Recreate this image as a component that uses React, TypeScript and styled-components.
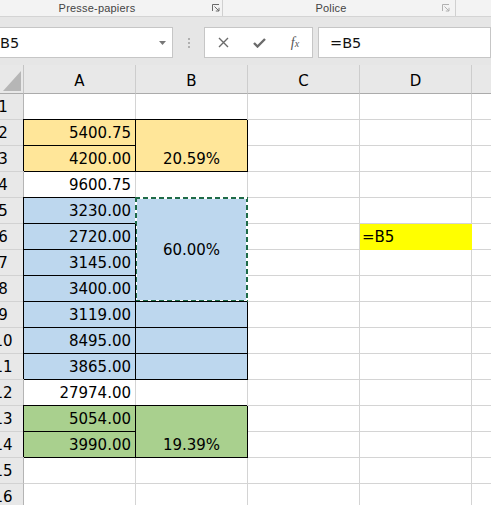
import React from 'react';
import styled, { createGlobalStyle, css } from 'styled-components';

const Global = createGlobalStyle`
  html, body { margin: 0; padding: 0; background: #e6e6e6; }
  body { font-family: "DejaVu Sans", sans-serif; overflow: hidden; }
  * { box-sizing: border-box; }
`;

const Page = styled.div`
  width: 491px;
  height: 505px;
  overflow: hidden;
  background: #e6e6e6;
`;

const Ribbon = styled.div`
  display: flex;
  height: 17px;
  background: #f3f3f3;
  border-bottom: 1px solid #d4d4d4;
  font-family: "Liberation Sans", Arial, sans-serif;
  font-size: 11px;
  color: #444;
`;

const Group = styled.div<{ $w: number }>`
  flex: none;
  width: ${(p) => p.$w}px;
  display: flex;
  align-items: center;
  border-right: 1px solid #d0d0d0;
`;

const GroupLabel = styled.div<{ $pr: number }>`
  flex: 1;
  text-align: center;
  padding-right: ${(p) => p.$pr}px;
  letter-spacing: 0.2px;
`;

const Launcher = styled.svg<{ $mr: number; $c: string }>`
  flex: none;
  width: 8px;
  height: 8px;
  margin-right: ${(p) => p.$mr}px;
  stroke: ${(p) => p.$c};
  fill: none;
  stroke-width: 1;
`;

const FormulaBar = styled.div`
  display: flex;
  height: 31px;
  margin-top: 10px;
`;

const Box = styled.div`
  background: #fff;
  border: 1px solid #c6c6c6;
  display: flex;
  align-items: center;
`;

const NameBox = styled(Box)`
  width: 177px;
  margin-left: -4px;
  padding-left: 3px;
  padding-right: 6px;
  font-size: 14.5px;
  color: #111;
  justify-content: space-between;
`;

const Dots = styled.div`
  width: 31px;
  display: flex;
  flex-direction: column;
  align-items: center;
  justify-content: center;
  gap: 2px;
`;

const Dot = styled.span`
  width: 2px;
  height: 2px;
  background: #b0b0b0;
`;

const ButtonBox = styled(Box)`
  width: 109px;
  display: grid;
  grid-template-columns: repeat(3, 36px);
  padding-left: 0px;
`;

const IconCell = styled.div`
  display: flex;
  align-items: center;
  justify-content: center;
  height: 100%;
  color: #666;
`;

const Fx = styled.span`
  font-family: "Liberation Serif", "DejaVu Serif", serif;
  font-style: italic;
  font-size: 14px;
  color: #555;
  & small { font-size: 10px; }
`;

const FormulaInput = styled(Box)`
  flex: 1;
  margin-left: 5px;
  padding-left: 11px;
  font-size: 14.5px;
  color: #111;
`;

const Sheet = styled.div`
  margin-top: 7px;
  margin-left: -17px;
  display: grid;
  grid-template-columns: 41px repeat(5, 112px);
  grid-template-rows: 29px repeat(16, 26px);
  font-family: "DejaVu Sans", sans-serif;
  font-size: 15px;
  color: #000;
`;

const Corner = styled.div`
  grid-row: 1;
  grid-column: 1;
  background: #e8e8e8;
  border-right: 1px solid #c4c4c4;
  border-bottom: 1px solid #ababab;
  display: flex;
  justify-content: flex-end;
  align-items: flex-end;
  padding: 0 2px 2px 0;
`;

const ColHeader = styled.div<{ $col: number }>`
  grid-row: 1;
  grid-column: ${(p) => p.$col + 1};
  background: #e8e8e8;
  border-right: 1px solid #cdcdcd;
  border-bottom: 1px solid #ababab;
  display: flex;
  align-items: center;
  justify-content: center;
  padding-top: 4px;
`;

const RowHeader = styled.div<{ $row: number }>`
  grid-row: ${(p) => p.$row + 1};
  grid-column: 1;
  background: #e8e8e8;
  border-right: 1px solid #b4b4b4;
  border-bottom: 1px solid #d2d2d2;
  display: flex;
  align-items: center;
  justify-content: center;
`;

type HAlign = 'left' | 'center' | 'right';
type VAlign = 'bottom' | 'middle';

const Cell = styled.div<{
  $row: number;
  $col: number;
  $span: number;
  $fill?: string;
  $bordered?: boolean;
  $marquee?: boolean;
  $h: HAlign;
  $v: VAlign;
}>`
  position: relative;
  grid-row: ${(p) => p.$row + 1} / span ${(p) => p.$span};
  grid-column: ${(p) => p.$col + 1};
  background: ${(p) => p.$fill || '#fff'};
  border-right: 1px solid ${(p) => (p.$bordered ? '#000' : p.$fill || '#d4d4d4')};
  border-bottom: 1px solid ${(p) => (p.$bordered ? '#000' : p.$fill || '#d4d4d4')};
  display: flex;
  line-height: 24px;
  white-space: nowrap;
  padding: ${(p) => (p.$h === 'left' ? '0 0 0 2px' : '0 4px')};
  justify-content: ${(p) =>
    p.$h === 'left' ? 'flex-start' : p.$h === 'center' ? 'center' : 'flex-end'};
  align-items: ${(p) => (p.$v === 'middle' ? 'center' : 'flex-end')};
  ${(p) =>
    p.$bordered &&
    css`
      box-shadow: -1px -1px 0 0 #000;
    `}
  ${(p) =>
    p.$marquee &&
    css`
      &::after {
        content: '';
        position: absolute;
        top: -1px;
        left: -1px;
        right: -1px;
        bottom: -1px;
        background:
          repeating-linear-gradient(90deg, #1e6b48 0 5px, #ffffff 5px 8px) top left / 100% 2px no-repeat,
          repeating-linear-gradient(90deg, #1e6b48 0 5px, #ffffff 5px 8px) bottom left / 100% 2px no-repeat,
          repeating-linear-gradient(180deg, #1e6b48 0 5px, #ffffff 5px 8px) top left / 2px 100% no-repeat,
          repeating-linear-gradient(180deg, #1e6b48 0 5px, #ffffff 5px 8px) top right / 2px 100% no-repeat;
        pointer-events: none;
      }
    `}
`;

const GOLD = '#FFE699';
const BLUE = '#BDD7EE';
const GREEN = '#A9D08E';
const YELLOW = '#FFFF00';

type Spec = {
  text?: string;
  span?: number;
  fill?: string;
  bordered?: boolean;
  marquee?: boolean;
  h?: HAlign;
  v?: VAlign;
};

const specs: Record<string, Spec> = {
  A2: { text: '5400.75', fill: GOLD, bordered: true },
  A3: { text: '4200.00', fill: GOLD, bordered: true },
  B2: { text: '20.59%', span: 2, fill: GOLD, bordered: true, h: 'center' },
  A4: { text: '9600.75' },
  A5: { text: '3230.00', fill: BLUE, bordered: true },
  A6: { text: '2720.00', fill: BLUE, bordered: true },
  A7: { text: '3145.00', fill: BLUE, bordered: true },
  A8: { text: '3400.00', fill: BLUE, bordered: true },
  B5: { text: '60.00%', span: 4, fill: BLUE, bordered: true, marquee: true, h: 'center', v: 'middle' },
  A9: { text: '3119.00', fill: BLUE, bordered: true },
  B9: { fill: BLUE, bordered: true },
  A10: { text: '8495.00', fill: BLUE, bordered: true },
  B10: { fill: BLUE, bordered: true },
  A11: { text: '3865.00', fill: BLUE, bordered: true },
  B11: { fill: BLUE, bordered: true },
  A12: { text: '27974.00' },
  A13: { text: '5054.00', fill: GREEN, bordered: true },
  A14: { text: '3990.00', fill: GREEN, bordered: true },
  B13: { text: '19.39%', span: 2, fill: GREEN, bordered: true, h: 'center' },
  D6: { text: '=B5', fill: YELLOW, h: 'left' },
};

const COLS = ['A', 'B', 'C', 'D', 'E'];
const ROWS = 16;

function buildCells() {
  const covered = new Set<string>();
  Object.entries(specs).forEach(([key, s]) => {
    if (s.span && s.span > 1) {
      const col = key[0];
      const row = parseInt(key.slice(1), 10);
      for (let i = 1; i < s.span; i++) covered.add(`${col}${row + i}`);
    }
  });
  const out: React.ReactNode[] = [];
  for (let r = 1; r <= ROWS; r++) {
    out.push(
      <RowHeader key={`rh${r}`} $row={r}>
        {r}
      </RowHeader>
    );
    COLS.forEach((c, ci) => {
      const key = `${c}${r}`;
      if (covered.has(key)) return;
      const s = specs[key] || {};
      const isNumber = s.text !== undefined && /^[0-9]/.test(s.text);
      out.push(
        <Cell
          key={key}
          $row={r}
          $col={ci + 1}
          $span={s.span || 1}
          $fill={s.fill}
          $bordered={s.bordered}
          $marquee={s.marquee}
          $h={s.h || (isNumber ? 'right' : 'left')}
          $v={s.v || 'bottom'}
        >
          {s.text}
        </Cell>
      );
    });
  }
  return out;
}

const LauncherIcon = ({ mr, c }: { mr: number; c: string }) => (
  <Launcher $mr={mr} $c={c} viewBox="0 0 8 8">
    <path d="M0.5 7V0.5H7" />
    <path d="M2.5 2.5L7 7M7 3.8V7H3.8" />
  </Launcher>
);

export default function App() {
  return (
    <Page>
      <Global />
      <Ribbon>
        <Group $w={223}>
          <GroupLabel $pr={18}>Presse-papiers</GroupLabel>
          <LauncherIcon mr={2} c="#6a6a6a" />
        </Group>
        <Group $w={233}>
          <GroupLabel $pr={3}>Police</GroupLabel>
          <LauncherIcon mr={5} c="#b0b0b0" />
        </Group>
      </Ribbon>
      <FormulaBar>
        <NameBox>
          <span>B5</span>
          <svg width="7" height="4" viewBox="0 0 7 4">
            <path d="M0 0H7L3.5 4Z" fill="#777" />
          </svg>
        </NameBox>
        <Dots>
          <Dot />
          <Dot />
          <Dot />
        </Dots>
        <ButtonBox>
          <IconCell>
            <svg width="11" height="11" viewBox="0 0 11 11">
              <path d="M1 1L10 10M10 1L1 10" stroke="#6b6b6b" strokeWidth="1.4" fill="none" />
            </svg>
          </IconCell>
          <IconCell>
            <svg width="13" height="10" viewBox="0 0 13 10">
              <path d="M1 5L4.5 8.5L12 1" stroke="#6b6b6b" strokeWidth="2.4" fill="none" />
            </svg>
          </IconCell>
          <IconCell>
            <Fx>
              f<small>x</small>
            </Fx>
          </IconCell>
        </ButtonBox>
        <FormulaInput>=B5</FormulaInput>
      </FormulaBar>
      <Sheet>
        <Corner>
          <svg width="18" height="20" viewBox="0 0 18 20">
            <path d="M18 0V20H0Z" fill="#b6b6b6" />
          </svg>
        </Corner>
        {COLS.map((c, i) => (
          <ColHeader key={c} $col={i + 1}>
            {c}
          </ColHeader>
        ))}
        {buildCells()}
      </Sheet>
    </Page>
  );
}
